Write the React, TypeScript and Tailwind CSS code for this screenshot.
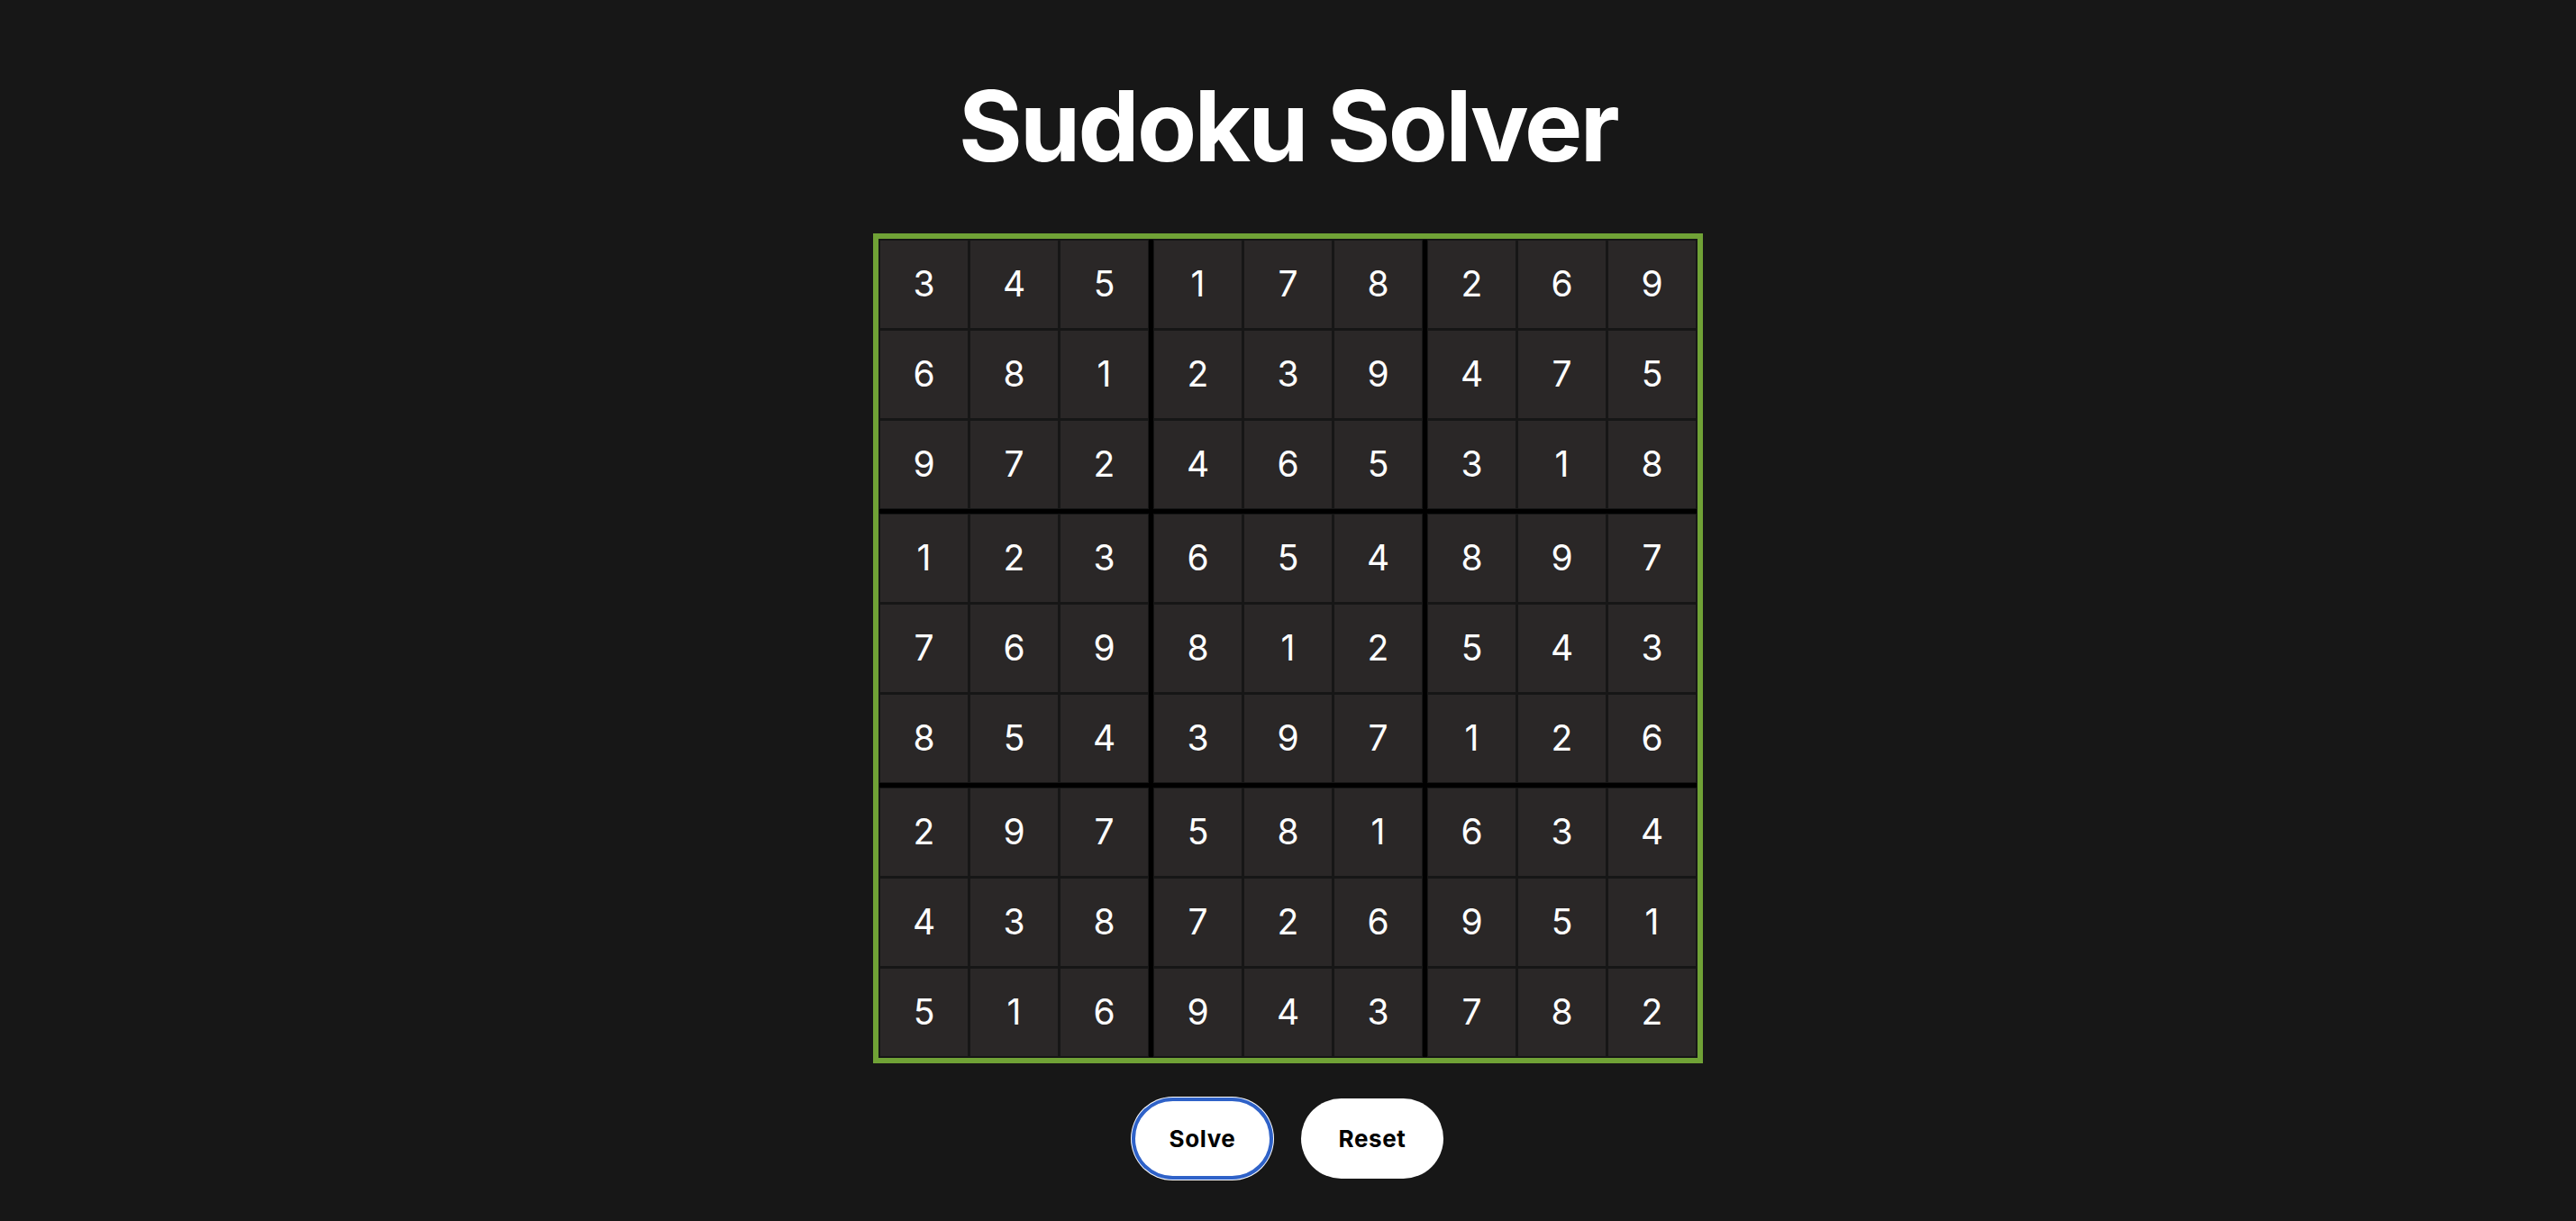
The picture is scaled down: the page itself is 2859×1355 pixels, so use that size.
import React from "react";

const grid: number[][] = [
  [3, 4, 5, 1, 7, 8, 2, 6, 9],
  [6, 8, 1, 2, 3, 9, 4, 7, 5],
  [9, 7, 2, 4, 6, 5, 3, 1, 8],
  [1, 2, 3, 6, 5, 4, 8, 9, 7],
  [7, 6, 9, 8, 1, 2, 5, 4, 3],
  [8, 5, 4, 3, 9, 7, 1, 2, 6],
  [2, 9, 7, 5, 8, 1, 6, 3, 4],
  [4, 3, 8, 7, 2, 6, 9, 5, 1],
  [5, 1, 6, 9, 4, 3, 7, 8, 2],
];

export default function App() {
  const boxes = [0, 1, 2, 3, 4, 5, 6, 7, 8];
  return (
    <div
      className="min-h-screen w-full bg-[#171717] flex flex-col items-center pt-[86px]"
      style={{ fontFamily: "Inter, 'Noto Sans', sans-serif" }}
    >
      <h1 className="text-[108px] leading-none font-bold text-white tracking-[-2.7px]">
        Sudoku Solver
      </h1>
      <div className="mt-[65px] border-[6px] border-[#70a236] bg-[#161616] p-[1px]">
        <div className="grid grid-cols-3 gap-[5px] bg-black">
          {boxes.map((b) => {
            const br = Math.floor(b / 3) * 3;
            const bc = (b % 3) * 3;
            const cells = [];
            for (let r = 0; r < 3; r++) {
              for (let c = 0; c < 3; c++) {
                cells.push(grid[br + r][bc + c]);
              }
            }
            return (
              <div key={b} className="bg-[#161616] p-[1px] grid grid-cols-3 gap-[3px]">
                {cells.map((v, i) => (
                  <div
                    key={i}
                    className="w-[97px] h-[97px] bg-[#2a2727] flex items-center justify-center text-[39px] text-white font-normal"
                  >
                    {v}
                  </div>
                ))}
              </div>
            );
          })}
        </div>
      </div>
      <div className="mt-[39px] flex items-center gap-[32px]">
        <button className="h-[89px] w-[155px] flex items-center justify-center rounded-full bg-white text-black text-[26px] tracking-[0.6px] font-bold border-[3px] border-[#2f62c8] shadow-[0_0_0_1px_#2f62c8,0_0_0_2px_#ffffff]">
          Solve
        </button>
        <button className="h-[89px] w-[158px] flex items-center justify-center rounded-full bg-white text-black text-[26px] tracking-[0.6px] font-bold">
          Reset
        </button>
      </div>
    </div>
  );
}
